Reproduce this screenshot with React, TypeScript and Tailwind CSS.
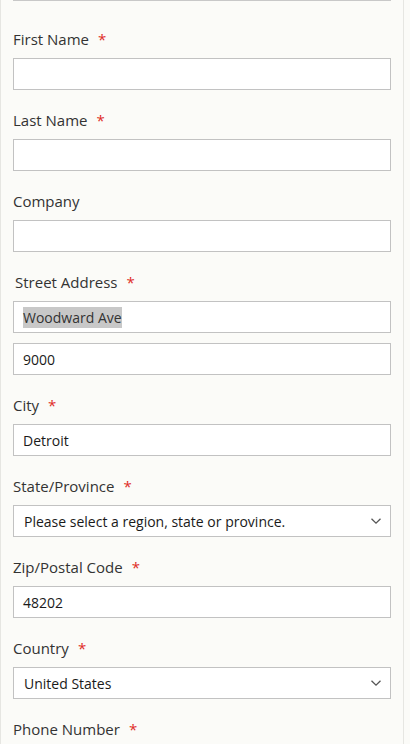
import * as React from "react";

// ---------------------------------------------------------------------------
// Pieces
// ---------------------------------------------------------------------------

function Label({ text, required, indent }: { text: string; required?: boolean; indent?: boolean }) {
  return (
    <div className={`mb-2 h-5 text-[15px] leading-[18px] text-[#333] ${indent ? "pl-[2px]" : ""}`}>
      {text}
      {required && <span className="ml-[9px] text-[#e02b27]">*</span>}
    </div>
  );
}

function Box({ children }: { children?: React.ReactNode }) {
  return (
    <div className="flex h-8 items-center border border-[#c2c2c2] bg-white px-[9px] text-[14px] text-[#333]">
      {children}
    </div>
  );
}

function Chevron() {
  return (
    <svg width="12" height="8" viewBox="0 0 12 8" fill="none" stroke="#555" strokeWidth="1.3" aria-hidden>
      <path d="M1.5 1.8l4.5 4.4 4.5-4.4" />
    </svg>
  );
}

function SelectBox({ value }: { value: string }) {
  return (
    <div className="flex h-8 items-center justify-between border border-[#c2c2c2] bg-white pl-[10px] pr-[8px] text-[14px] text-[#1a1a1a]">
      <span>{value}</span>
      <Chevron />
    </div>
  );
}

function Field({
  label,
  required,
  children,
  indent,
}: {
  label: string;
  required?: boolean;
  children: React.ReactNode;
  indent?: boolean;
}) {
  return (
    <div className="mb-[21px]">
      <Label text={label} required={required} indent={indent} />
      {children}
    </div>
  );
}

// ---------------------------------------------------------------------------
// Page
// ---------------------------------------------------------------------------

export default function App() {
  return (
    <div className="h-[744px] overflow-hidden bg-[#fbfbf8]" style={{ fontFamily: '"Open Sans", sans-serif' }}>
      <div className="h-full w-[404px] border-x border-[#e6e6e2] px-3">
        <div className="h-[30px] border-t border-[#c8c8c8]" />

        <Field label="First Name" required>
          <Box />
        </Field>

        <Field label="Last Name" required>
          <Box />
        </Field>

        <Field label="Company">
          <Box />
        </Field>

        <Field label="Street Address" required indent>
          <Box>
            <span className="bg-[#c8c8c8] text-[#333]">Woodward Ave</span>
          </Box>
          <div className="mt-[10px]">
            <Box>
              <span className="text-[#1a1a1a]">9000</span>
            </Box>
          </div>
        </Field>

        <Field label="City" required>
          <Box>
            <span className="text-[#1a1a1a]">Detroit</span>
          </Box>
        </Field>

        <Field label="State/Province" required>
          <SelectBox value="Please select a region, state or province." />
        </Field>

        <Field label="Zip/Postal Code" required>
          <Box>
            <span className="text-[#1a1a1a]">48202</span>
          </Box>
        </Field>

        <Field label="Country" required>
          <SelectBox value="United States" />
        </Field>

        <Field label="Phone Number" required>
          <Box />
        </Field>
      </div>
    </div>
  );
}
